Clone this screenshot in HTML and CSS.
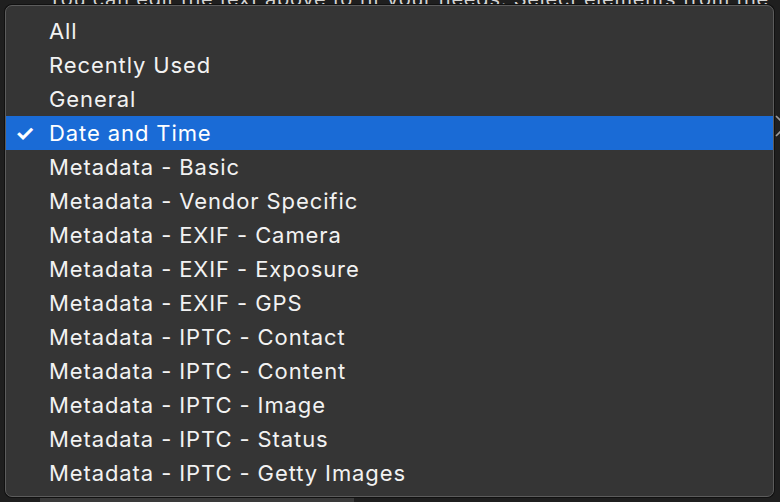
FILE: index.html
```html
<!DOCTYPE html>
<html>
<head>
<meta charset="utf-8">
<link rel="stylesheet" href="styles.css">
</head>
<body>
<div class="page">
  <p class="bg-text">You can edit the text above to fit your needs. Select elements from the</p>
  <div class="bg-field"></div>
  <svg class="bg-arrows" width="8" height="30" viewBox="0 0 8 30"><path d="M2 4 L8 10 M2 24 L8 18" stroke="#9a9a9a" stroke-width="1.6" fill="none"/></svg>
</div>
<div class="menu">
  <ul class="items">
    <li class="item">All</li>
    <li class="item">Recently Used</li>
    <li class="item">General</li>
    <li class="item selected"><span class="check">✓</span>Date and Time</li>
    <li class="item">Metadata - Basic</li>
    <li class="item">Metadata - Vendor Specific</li>
    <li class="item">Metadata - EXIF - Camera</li>
    <li class="item">Metadata - EXIF - Exposure</li>
    <li class="item">Metadata - EXIF - GPS</li>
    <li class="item">Metadata - IPTC - Contact</li>
    <li class="item">Metadata - IPTC - Content</li>
    <li class="item">Metadata - IPTC - Image</li>
    <li class="item">Metadata - IPTC - Status</li>
    <li class="item">Metadata - IPTC - Getty Images</li>
  </ul>
</div>
</body>
</html>
```
FILE: styles.css
```css
html, body {
  margin: 0;
  padding: 0;
  width: 780px;
  height: 502px;
  overflow: hidden;
  background: #1f1f1f;
  font-family: Inter, "Noto Sans", sans-serif;
}
.page {
  position: relative;
  width: 780px;
  height: 502px;
  overflow: hidden;
}
.bg-text {
  margin: 0;
  padding-left: 48px;
  font-size: 20px;
  line-height: 20px;
  letter-spacing: 0.8px;
  color: #d4d4d4;
  white-space: nowrap;
  transform: translateY(-11px);
}
.bg-field {
  position: absolute;
  left: 40px;
  top: 496px;
  width: 314px;
  height: 6px;
  background: #3a3a3a;
}
.bg-arrows {
  position: absolute;
  left: 774px;
  top: 112px;
}
.menu {
  position: absolute;
  left: 5px;
  top: 5px;
  width: 767px;
  height: 490px;
  background: #353535;
  border: 1px solid #5c5c5c;
  border-radius: 7px;
  box-shadow: 0 0 0 1px #111;
  box-sizing: content-box;
}
.items {
  list-style: none;
  margin: 0;
  padding: 8px 0 0 0;
}
.item {
  position: relative;
  height: 34px;
  line-height: 34px;
  padding-left: 43px;
  font-size: 22px;
  letter-spacing: 0.9px;
  color: #f2f2f2;
  white-space: nowrap;
}
.item.selected {
  background: #1a6bd6;
  color: #ffffff;
}
.check {
  position: absolute;
  left: 9px;
  top: 0;
  font-size: 22px;
  font-weight: 700;
  letter-spacing: 0;
}
```
